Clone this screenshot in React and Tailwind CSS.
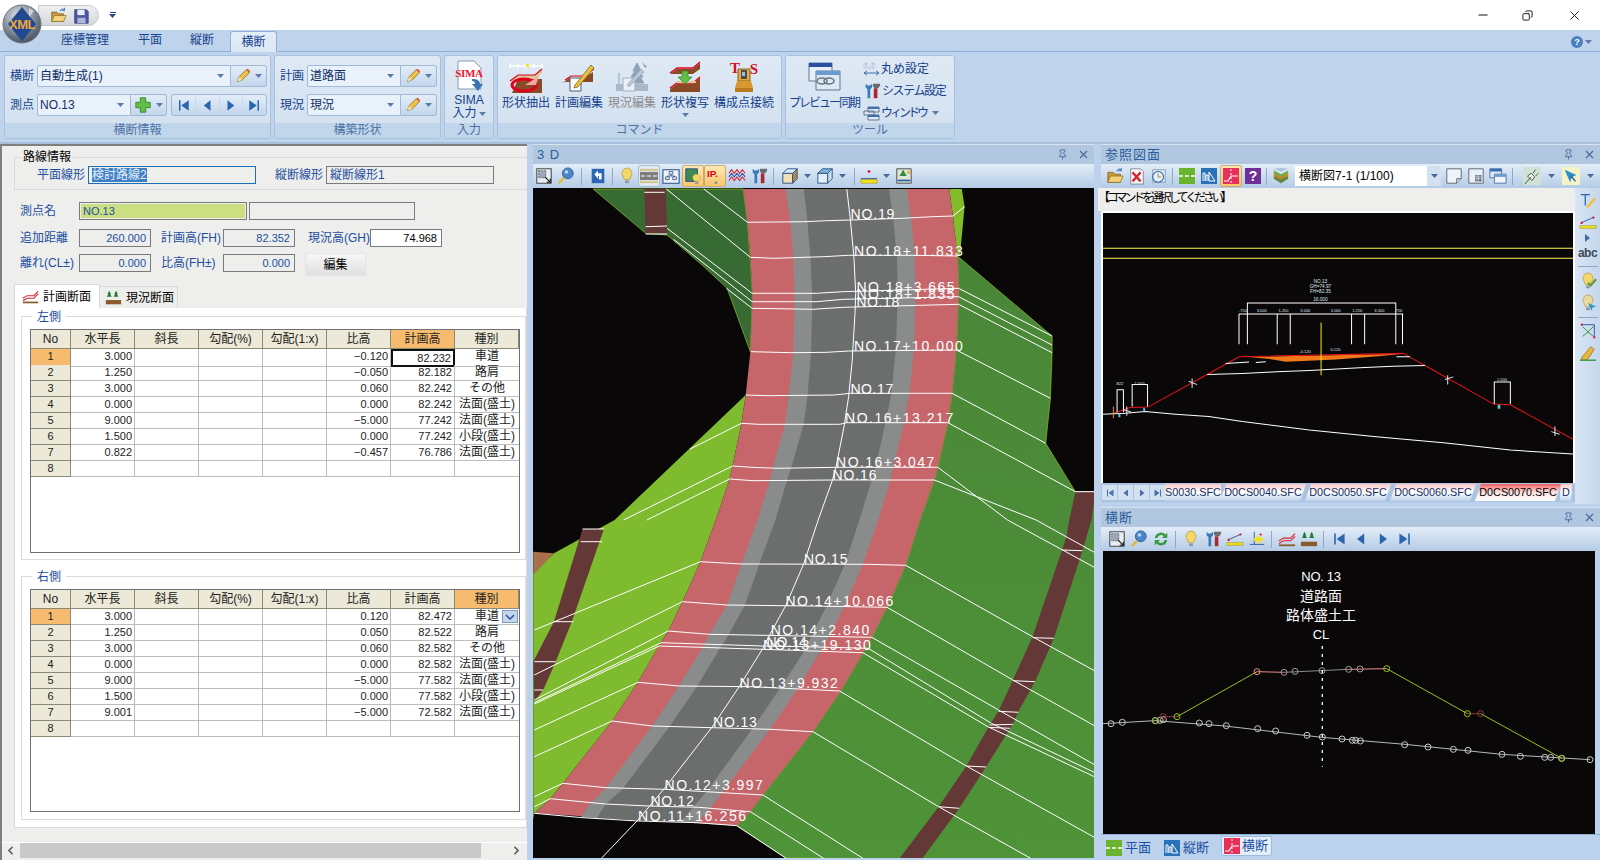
import React from 'react';
import { Minus, X, Copy, ChevronLeft, ChevronRight, Pin } from 'lucide-react';

const Caret = ({ c = '#5b7ca8' }) => (
  <svg width="7" height="4" className="shrink-0"><path d="M0 0h7L3.5 4z" fill={c} /></svg>
);

// ---- small toolbar icons ----
const S = ({ s = 18, children }) => <svg width={s} height={s} viewBox="0 0 20 20" className="shrink-0">{children}</svg>;

const Pencil = ({ s = 16 }) => (
  <S s={s}>
    <path d="M3 17l2-6 9-9 4 4-9 9z" fill="#f0c040" stroke="#6b5a20" strokeWidth=".8" />
    <path d="M14 2l4 4 1-2-3-3z" fill="#d65a4a" />
    <path d="M3 17l2-6 4 4z" fill="#f3dcb0" />
  </S>
);
const Plus = () => (
  <S s={18}><path d="M7 2h6v5h5v6h-5v5H7v-5H2V7h5z" fill="#63bd46" stroke="#2f8a2a" strokeWidth="1" /></S>
);
const Nav = ({ d, s = 16, c = '#2a66ad' }) => {
  const p = { first: 'M4 3h2v14H4zM17 3v14L7 10z', prev: 'M14 3v14L5 10z', next: 'M6 3v14l9-7z', last: 'M14 3h2v14h-2zM3 3v14l10-7z' };
  return <S s={s}><path d={p[d]} fill={c} /></S>;
};
const Folder = ({ s = 18 }) => (
  <S s={s}>
    <path d="M2 6h6l2 2h6v9H2z" fill="#c99a3a" stroke="#7b5a1c" strokeWidth=".8" />
    <path d="M2 17l3-7h14l-3 7z" fill="#f2d37a" stroke="#8b6a22" strokeWidth=".8" />
    <path d="M12 5c1-3 3-3 5-2M17 1v3h-3" stroke="#4a7fc0" fill="none" strokeWidth="1.2" />
  </S>
);
const Floppy = () => (
  <S s={18}>
    <path d="M3 3h13l2 2v13H3z" fill="#5059a8" stroke="#2d3470" strokeWidth=".8" />
    <path d="M6 3h8v6H6z" fill="#e9edf5" />
    <path d="M6 12h9v6H6z" fill="#aeb6d8" />
  </S>
);
const ZoomBox = () => (
  <S>
    <path d="M2 2h16v16H2z" fill="#e8eef5" stroke="#4a4a4a" strokeWidth="1.2" />
    <path d="M4 4h8v8H4z" fill="#9aa9bb" strokeDasharray="2 1" stroke="#333" strokeWidth=".6" />
    <path d="M11 11l6 6M17 13v4h-4" stroke="#111" strokeWidth="1.2" fill="none" />
  </S>
);
const Magnifier = () => (
  <S>
    <path d="M8 12l-6 6" stroke="#e0b83a" strokeWidth="2.6" />
    <circle cx="12" cy="7" r="6" fill="#4a86c8" stroke="#2c5c96" />
    <circle cx="10.5" cy="5.5" r="2" fill="#bcd8f2" />
  </S>
);
const Back = () => (
  <S>
    <path d="M3 2h14v16H3z" fill="#2a66b5" />
    <path d="M6 8l4-4v3h4v7h-3v-4h-1v3z" fill="#fff" />
  </S>
);
const Bulb = ({ c = '#f3d76a', badge }) => (
  <S>
    <path d="M10 1a6 6 0 0 1 4 10l-1 3H7l-1-3a6 6 0 0 1 4-10z" fill={c} stroke="#b89a3a" strokeWidth=".8" />
    <path d="M8 15h4v3H8z" fill="#8b97a5" />
    {badge === 'check' && <path d="M10 12l3 3 6-7" stroke="#5f9a3a" strokeWidth="2.4" fill="none" />}
    {badge === 'arrow' && <path d="M10 10l9 4-4 1-1 4z" fill="#2a9ac8" />}
  </S>
);
const Road = () => (
  <S s={20}>
    <path d="M1 2h18v16H1z" fill="#dfe3e6" />
    <path d="M1 6h18v8H1z" fill="#7d7d7d" />
    <path d="M2 10h4M8 10h4M14 10h4" stroke="#fff" strokeWidth="1.2" />
    <path d="M1 4h18M1 16h18" stroke="#c8a84a" strokeWidth="1" />
  </S>
);
const Tree = () => (
  <S>
    <path d="M1 3h18v15H1z" fill="#eef3f9" stroke="#28507f" strokeWidth="1.2" />
    <path d="M8 5h4v3H8zM4 11h4v3H4zM12 11h4v3h-4zM10 8v2M6 10h8M6 10v1M14 10v1" fill="none" stroke="#28507f" strokeWidth=".9" />
  </S>
);
const BulbMap = () => (
  <S>
    <path d="M2 2h13v14H2z" fill="#3f8a52" stroke="#26507f" />
    <path d="M14 8a4 4 0 0 1 3 7l-1 1h-4l-1-1a4 4 0 0 1 3-7z" fill="#f3d76a" stroke="#b89a3a" strokeWidth=".6" />
    <path d="M12 17h4v2h-4z" fill="#8b97a5" />
  </S>
);
const IpBulb = () => (
  <S>
    <text x="1" y="11" fontFamily="Liberation Sans" fontWeight="700" fontSize="11" fill="#e2001a">IP.</text>
    <path d="M9 11h4l-1 5h-2z" fill="#f3d76a" />
    <path d="M9.5 16h3v3h-3z" fill="#8b97a5" />
  </S>
);
const Wave = () => (
  <S>
    <path d="M1 7l3-4 3 4 3-4 3 4 3-4 3 4" stroke="#d9272e" fill="none" strokeWidth="1.2" />
    <path d="M1 11l3-4 3 4 3-4 3 4 3-4 3 4" stroke="#2a4fa8" fill="none" strokeWidth="1.2" />
    <path d="M1 15l3-4 3 4 3-4 3 4 3-4 3 4" stroke="#d9272e" fill="none" strokeWidth="1.2" />
  </S>
);
const Tools = () => (
  <S>
    <path d="M3 2v4l2 2v10h3V8l2-2V2L8 4H5z" fill="#3d78b8" />
    <path d="M12 7h4v11h-4z" fill="#a82a30" />
    <path d="M11 2h8v2l-2 3h-4l-2-2z" fill="#6c6c6c" />
  </S>
);
const Cube = ({ glass }) => (
  <S>
    <path d="M2 7h11v11H2z" fill={glass ? '#e4eef8' : '#f1dfb8'} stroke="#26507f" />
    <path d="M2 7l5-5h11l-5 5z" fill={glass ? '#7fb2de' : '#d9ecfa'} stroke="#26507f" />
    <path d="M13 7l5-5v11l-5 5z" fill={glass ? '#c6dcf0' : '#b08a4a'} stroke="#26507f" />
  </S>
);
const RulerDot = () => (
  <S>
    <circle cx="10" cy="5" r="1.5" fill="#e0001b" />
    <path d="M1 13h18" stroke="#24406e" strokeWidth="1" />
    <path d="M1 14h18v4H1z" fill="#f2e21c" stroke="#8a7d10" strokeWidth=".5" />
  </S>
);
const LandImg = () => (
  <S>
    <path d="M2 2h16v16H2z" fill="#dfe6d8" stroke="#444" />
    <path d="M9 3l4 7H5z" fill="#2f8a3a" />
    <path d="M3 15h14" stroke="#2a66ad" strokeWidth="2" />
    <circle cx="15" cy="6" r="1.8" fill="#e3b93a" />
  </S>
);
const XDoc = () => (
  <S>
    <path d="M3 2h11l3 3v14H3z" fill="#f5f7fa" stroke="#7a8698" />
    <path d="M5 6l9 10M14 6L5 16" stroke="#d9272e" strokeWidth="2.6" />
  </S>
);
const Clock = () => (
  <S>
    <path d="M3 3h14v14H3z" fill="#dbe7f5" stroke="#7a8ea8" strokeWidth=".8" />
    <circle cx="9" cy="11" r="6" fill="#e8f1fa" stroke="#2a66ad" strokeWidth="1.2" />
    <path d="M9 7v4h3" stroke="#b89a3a" strokeWidth="1.2" fill="none" />
  </S>
);
const GreenMode = ({ s = 16 }) => (
  <svg width={s} height={s} viewBox="0 0 16 16" className="shrink-0">
    <path d="M0 0h16v16H0z" fill="#6ab42d" />
    <path d="M0 8h4M6 8h4M12 8h4" stroke="#fff" strokeWidth="1.6" />
  </svg>
);
const BlueMode = ({ s = 16 }) => (
  <svg width={s} height={s} viewBox="0 0 16 16" className="shrink-0">
    <path d="M0 0h16v16H0z" fill="#2a72b8" />
    <path d="M2 13V5h2v8M5 13V7h2v6M8 13V4l6 9z" stroke="#fff" strokeWidth="1" fill="none" />
  </svg>
);
const RedMode = ({ s = 16 }) => (
  <svg width={s} height={s} viewBox="0 0 16 16" className="shrink-0">
    <path d="M0 0h16v16H0z" fill="#e6305a" />
    <path d="M1 13h4l3-5h7" stroke="#fff" strokeWidth="1.2" fill="none" />
    <path d="M8 1v2M8 5v2M8 9v2M8 13v2" stroke="#fff" strokeWidth="1" />
  </svg>
);
const Help = () => (
  <svg width="16" height="16" viewBox="0 0 16 16" className="shrink-0">
    <path d="M0 0h16v16H0z" fill="#6f2f96" />
    <text x="8" y="13" textAnchor="middle" fontFamily="Liberation Sans" fontWeight="700" fontSize="14" fill="#fff">?</text>
  </svg>
);
const Layers = () => (
  <S>
    <path d="M10 11l8-4v3l-8 5-8-5V7z" fill="#d97a2b" />
    <path d="M10 8l8-4v3l-8 5-8-5V4z" fill="#6fae3d" />
    <path d="M10 5l8-3-8-1-8 1z" fill="#a6c4e0" />
    <path d="M10 14l8-4v3l-8 5-8-5v-3z" fill="#5a8a3a" />
  </S>
);
const Note = () => (
  <S>
    <path d="M2 2h16v11l-5 5H2z" fill="#eef4fa" stroke="#56606e" />
    <path d="M13 18v-5h5" fill="#cfdbe8" stroke="#56606e" />
  </S>
);
const Calc = () => (
  <S>
    <path d="M2 2h16v16H2z" fill="#e8f0f8" stroke="#56606e" />
    <path d="M9 9h7v7H9z" fill="#56606e" />
    <path d="M11 9v7M13 9v7M9 11h7M9 13h7" stroke="#e8f0f8" strokeWidth=".7" />
  </S>
);
const Windows = () => (
  <S s={18}>
    <path d="M1 2h13v10H1z" fill="#dbe8f5" stroke="#4a72a8" />
    <path d="M1 2h13v3H1z" fill="#3d6cb0" />
    <path d="M6 8h13v10H6z" fill="#eef4fa" stroke="#4a72a8" />
    <path d="M6 8h13v3H6z" fill="#6a9ad0" />
  </S>
);
const Plug = () => (
  <S>
    <path d="M0 0h20v20H0z" fill="#cfe2d4" />
    <path d="M2 19l7-8M9 7l4 4-3 4-5-5zM11 7l3-4M14 10l3-3" stroke="#444" fill="#f4f4f4" strokeWidth="1" />
  </S>
);
const Arrow = () => (
  <S>
    <path d="M0 0h20v20H0z" fill="#f4f3c8" />
    <path d="M3 3l13 6-5 2-2 6z" fill="#2a8fc8" />
    <path d="M10 10l5 6" stroke="#2a5f9a" strokeWidth="1.6" />
  </S>
);
const Sep = () => <div className="w-px h-[17px] bg-[#8fa9c8] shrink-0" />;
const Slope = ({ s = 18, tree }) => (
  <S s={s}>
    {tree ? (
      <path d="M5 2l2 4h-1l2 3H2l2-3H3zM13 2l2 4h-1l2 3h-6l2-3h-1z" fill="#1e7a2e" />
    ) : (
      <path d="M1 12l5-3h8l5-5M1 15l5-3h8l5-5" stroke="#d9272e" fill="none" strokeWidth="1.2" />
    )}
    <path d="M1 13h18v5H1z" fill={tree ? '#8a5a2c' : 'none'} />
    {!tree && <path d="M1 16h18v2H1z" fill="#8a5a2c" />}
  </S>
);
const SlopeRuler = () => (
  <S>
    <path d="M2 11l14-6" stroke="#2a4fa8" strokeWidth="1" />
    <circle cx="3" cy="11" r="1.2" fill="#e0001b" />
    <circle cx="16" cy="5" r="1.2" fill="#e0001b" />
    <path d="M1 14h18v3H1z" fill="#f2e21c" stroke="#8a7d10" strokeWidth=".5" />
  </S>
);
const Offset = () => (
  <S>
    <path d="M7 2v14M2 16h16" stroke="#2a4fa8" strokeWidth="1" />
    <path d="M6 9h4V6h3v3h4v3h-4v3h-3v-3H6z" fill="#f2e21c" />
    <circle cx="14" cy="5" r="1.2" fill="#e0001b" />
  </S>
);
const Refresh = () => (
  <S>
    <path d="M3 9a7 7 0 0 1 12-4l2-2v6h-6l2-2a4 4 0 0 0-7 2zM17 11a7 7 0 0 1-12 4l-2 2v-6h6l-2 2a4 4 0 0 0 7-2z" fill="#3a9a42" />
  </S>
);

// ---- large ribbon icons ----
const Big = ({ children }) => <svg width="34" height="32" viewBox="0 0 34 32">{children}</svg>;
const SimaIcon = () => (
  <Big>
    <path d="M6 1h16l7 7v21H6z" fill="#fff" stroke="#8b9bb0" />
    <text x="17" y="17" textAnchor="middle" fontFamily="Liberation Serif" fontSize="11" fontWeight="700" fill="#f0142d" letterSpacing="-.3">SIMA</text>
    <path d="M20 19c6 0 8 2 8 5h3l-5 7-6-7h3c0-2-1-3-3-3z" fill="#3c74b8" />
  </Big>
);
const ShapeExtract = () => (
  <Big>
    <path d="M1 2v5M9 2v5M17 2v5M25 2v5M33 2v5M1 5h32" stroke="#fff" strokeWidth="1.5" />
    <path d="M17 3h3v3h-3z" fill="#f2e21c" />
    <path d="M1 20l8-6h17l7-6v4l-7 6H9z" fill="#d9c79a" />
    <path d="M1 20l8-6h17l7-6" stroke="#e0001b" fill="none" strokeWidth="1.2" />
    <path d="M9 18h24v14H3z" fill="#8a4a26" />
    <ellipse cx="15" cy="24" rx="12" ry="6" fill="none" stroke="#e0001b" strokeWidth="3" />
    <path d="M16 24l14-9-3 9z" fill="#f3a7a0" />
  </Big>
);
const PlanEdit = () => (
  <Big>
    <path d="M1 22l6-5h14l10-6v10H1z" fill="#8a4a26" />
    <path d="M3 19l6-4h12l11-7" stroke="#e0001b" fill="none" strokeWidth="1.2" />
    <path d="M8 17h11v13H8z" fill="#fff" stroke="#4c5a6c" />
    <path d="M13 24L29 4l3 3-16 19-4 1z" fill="#eebf3c" stroke="#6b5a20" strokeWidth=".7" />
  </Big>
);
const GhostEdit = () => (
  <Big>
    <path d="M4 24V12M22 2l4 8h-2l4 6h-3l4 6H15l4-6h-3l4-6h-2z" fill="#8ea3b8" stroke="#8ea3b8" />
    <path d="M27 1l3 3 2 1-2 2z" fill="#8ea3b8" />
    <path d="M1 23h32v7H1z" fill="#a9b7c6" />
    <path d="M8 17h12v13H8z" fill="#e8eff6" stroke="#9fb0c0" />
    <path d="M12 24L26 8l3 3-15 15z" fill="#b9c8d6" stroke="#8c9cae" strokeWidth=".6" />
  </Big>
);
const ShapeCopy = () => (
  <Big>
    <path d="M2 13l7-5h16l7-6v6l-7 5H2z" fill="#8a4a26" />
    <path d="M2 12l7-5h16l7-6" stroke="#e0001b" fill="none" strokeWidth="1.4" />
    <path d="M2 28l7-5h16l7-6v14H2z" fill="#8a4a26" />
    <path d="M2 27l7-5h16l7-6" stroke="#e0001b" fill="none" strokeWidth="1.4" />
    <path d="M6 22l4-2h18v2z" fill="#d9c79a" />
    <path d="M14 10h6v6h4l-7 7-7-7h4z" fill="#63bd46" stroke="#2f8a2a" strokeWidth=".7" />
  </Big>
);
const TsIcon = () => (
  <Big>
    <path d="M11 8h12v12H11z" fill="#e8a93c" stroke="#8a6418" />
    <path d="M14 9h6v9h-6z" fill="#4c4c55" />
    <path d="M15 11h3v4h-3z" fill="#8fc0e8" />
    <path d="M10 20h14l2 7H8z" fill="#d79a30" />
    <path d="M8 27h18v4H8z" fill="#b97a20" />
    <text x="8" y="12" textAnchor="middle" fontFamily="Liberation Serif" fontSize="15" fontWeight="700" fill="#d3101e">T</text>
    <text x="27" y="13" textAnchor="middle" fontFamily="Liberation Serif" fontSize="15" fontWeight="700" fill="#d3101e">S</text>
  </Big>
);
const PreviewSync = () => (
  <Big>
    <path d="M2 2h23v18H2z" fill="#e8f0f8" stroke="#5f7892" />
    <path d="M2 2h23v4H2z" fill="#2a4fa0" />
    <path d="M9 10h24v19H9z" fill="#dce8f4" stroke="#5f7892" />
    <path d="M9 10h24v4H9z" fill="#6a9ad0" />
    <ellipse cx="15" cy="20" rx="5" ry="3" fill="none" stroke="#6a7683" strokeWidth="1.6" />
    <ellipse cx="22" cy="20" rx="5" ry="3" fill="none" stroke="#6a7683" strokeWidth="1.6" />
  </Big>
);
const RoundIcon = () => (
  <svg width="17" height="16" viewBox="0 0 17 16" className="shrink-0">
    <text x="0" y="8" fontFamily="Liberation Sans" fontSize="9" fontWeight="700" fill="#fff" stroke="#6b8ab0" strokeWidth=".3">0.0</text>
    <path d="M1 12h15M1 12l3-2M1 12l3 2M16 12l-3-2M16 12l-3 2" stroke="#3f6fa8" fill="none" />
  </svg>
);
const WindowIcon = () => (
  <svg width="17" height="15" viewBox="0 0 17 15" className="shrink-0">
    <path d="M5 1h11v5H5zM1 5h10v4H1zM5 9h11v5H5z" fill="#dfe9f4" stroke="#5f7892" />
    <path d="M5 1h11v2H5zM5 9h11v2H5z" fill="#3f6fa8" />
  </svg>
);
const Logo = () => (
  <svg width="40" height="40" viewBox="0 0 40 40">
    <defs>
      <radialGradient id="orb" cx=".4" cy=".3" r=".8">
        <stop offset="0" stopColor="#dfe6ee" />
        <stop offset=".7" stopColor="#66717f" />
        <stop offset="1" stopColor="#3d434d" />
      </radialGradient>
    </defs>
    <circle cx="20" cy="20" r="19" fill="url(#orb)" stroke="#6f7882" />
    <path d="M20 3l14 17-14 17L6 20z" fill="#22498f" />
    <path d="M27 4l5 3-5 6z" fill="#e9edf3" opacity=".7" />
    <text x="20" y="25" textAnchor="middle" fontFamily="Liberation Sans" fontSize="13" fontWeight="700" fill="#f0a63c" letterSpacing="-.5">XML</text>
  </svg>
);

// ---- ribbon ----
const Combo = ({ w, text }) => (
  <div className={`${w} h-[22px] bg-[#e9f1fb] border border-[#a1b9d6] flex items-center pl-[2px] pr-[6px] justify-between rounded-l-[2px]`}>
    <span className="text-[12px] text-[#102f63] whitespace-nowrap">{text}</span>
    <Caret />
  </div>
);
const EditBtn = ({ children }) => (
  <div className="w-[36px] h-[22px] border border-l-0 border-[#a1b9d6] rounded-r-[3px] bg-gradient-to-b from-[#e3edf8] to-[#c3d6ec] flex items-center justify-center gap-[4px]">
    {children || <Pencil />}
    <Caret />
  </div>
);
const RibbonLabel = ({ children }) => <span className="text-[12px] text-[#15428b] whitespace-nowrap">{children}</span>;

const Group = ({ w, title, children }) => (
  <div className={`${w} h-[84px] rounded-[3px] border border-[#a8c2de] bg-gradient-to-b from-[#dfe9f5] to-[#d1e0ef] flex flex-col overflow-hidden shrink-0`}>
    <div className="flex-1 min-h-0">{children}</div>
    <div className="h-[15px] bg-[#c1d5eb] text-[12px] leading-[15px] text-[#4d72a3] text-center">{title}</div>
  </div>
);

const BigBtn = ({ w, icon, label, caret, gray, tight }) => (
  <div className={`${w} flex flex-col items-center shrink-0`}>
    <div className="h-[33px] flex items-center justify-center">{icon}</div>
    <div className={`text-[12px] leading-[14px] mt-[3px] whitespace-nowrap ${tight ? 'tracking-[-2px]' : ''} ${gray ? 'text-[#8c8c8c]' : 'text-[#15428b]'}`}>{label}</div>
    {caret && <div className="mt-[3px]"><Caret /></div>}
  </div>
);

const SmallTool = ({ icon, label, caret, tracking = '' }) => (
  <div className="h-[22px] flex items-center gap-[1px] whitespace-nowrap">
    {icon}
    <span className={`text-[12px] text-[#15428b] ${tracking}`}>{label}</span>
    {caret && <span className="ml-[5px]"><Caret /></span>}
  </div>
);

const Ribbon = () => (
  <div className="h-[92px] shrink-0 bg-[#bfd3ed] flex gap-[3px] pl-[4px] pt-[3px] border-b-[2px] border-[#a7c1dd]">
    <Group w="w-[267px]" title="横断情報">
      <div className="flex flex-col gap-[7px] pt-[9px] pl-[5px]">
        <div className="flex items-center gap-[3px]">
          <RibbonLabel>横断</RibbonLabel>
          <div className="flex"><Combo w="w-[194px]" text="自動生成(1)" /><EditBtn /></div>
        </div>
        <div className="flex items-center gap-[3px]">
          <RibbonLabel>測点</RibbonLabel>
          <div className="flex"><Combo w="w-[94px]" text="NO.13" /><EditBtn><Plus /></EditBtn></div>
          <div className="ml-[1px] flex h-[22px] w-[96px] border border-[#a1b9d6] rounded-[3px] bg-gradient-to-b from-[#e3edf8] to-[#c3d6ec]">
            {['first', 'prev', 'next', 'last'].map((d, i) => (
              <div key={d} className={`flex-1 flex items-center justify-center ${i ? 'border-l border-[#c9d9ea]' : ''}`}><Nav d={d} s={15} /></div>
            ))}
          </div>
        </div>
      </div>
    </Group>
    <Group w="w-[167px]" title="構築形状">
      <div className="flex flex-col gap-[7px] pt-[9px] pl-[5px]">
        <div className="flex items-center gap-[3px]">
          <RibbonLabel>計画</RibbonLabel>
          <div className="flex"><Combo w="w-[94px]" text="道路面" /><EditBtn /></div>
        </div>
        <div className="flex items-center gap-[3px]">
          <RibbonLabel>現況</RibbonLabel>
          <div className="flex"><Combo w="w-[94px]" text="現況" /><EditBtn /></div>
        </div>
      </div>
    </Group>
    <Group w="w-[50px]" title="入力">
      <div className="flex flex-col items-center pt-[4px]">
        <div className="h-[32px]"><SimaIcon /></div>
        <div className="text-[12px] leading-[13px] text-[#15428b] mt-[2px]">SIMA</div>
        <div className="text-[12px] leading-[13px] text-[#15428b] flex items-center gap-[2px]">入力<Caret /></div>
      </div>
    </Group>
    <Group w="w-[285px]" title="コマンド">
      <div className="flex pt-[4px] pl-[4px] gap-[5px]">
        <BigBtn w="w-[48px]" icon={<ShapeExtract />} label="形状抽出" />
        <BigBtn w="w-[48px]" icon={<PlanEdit />} label="計画編集" />
        <BigBtn w="w-[48px]" icon={<GhostEdit />} label="現況編集" gray />
        <BigBtn w="w-[48px]" icon={<ShapeCopy />} label="形状複写" caret />
        <BigBtn w="w-[60px]" icon={<TsIcon />} label="構成点接続" />
      </div>
    </Group>
    <Group w="w-[170px]" title="ツール">
      <div className="flex pt-[4px] pl-[4px]">
        <BigBtn w="w-[68px]" icon={<PreviewSync />} label="プレビュー同期" tight />
        <div className="flex flex-col ml-[5px] -mt-[2px]">
          <SmallTool icon={<RoundIcon />} label="丸め設定" />
          <SmallTool icon={<Tools />} label="システム設定" tracking="tracking-[-1.4px]" />
          <SmallTool icon={<WindowIcon />} label="ウィンドウ" tracking="tracking-[-3px]" caret />
        </div>
      </div>
    </Group>
  </div>
);

// ---- left panel ----
const LabelB = ({ w, className = '', children }) => (
  <span className={`${w} shrink-0 text-[12px] leading-[18px] text-[#1d4ea0] whitespace-nowrap ${className}`}>{children}</span>
);
const Val = ({ children, white, w = 'w-[72px]' }) => (
  <div className={`${w} h-[18px] shrink-0 border border-[#7a7a7a] px-[4px] text-right text-[11px] leading-[16px] ${white ? 'bg-white text-black' : 'text-[#1d4ea0]'}`}>{children}</div>
);

const cols = 'grid grid-cols-[40px_64px_64px_64px_64px_64px_64px_1fr]';
const heads = ['No', '水平長', '斜長', '勾配(%)', '勾配(1:x)', '比高', '計画高', '種別'];

const GridTable = ({ rows, activeHead, selectCell, dropdownFirst, h = 'h-[224px]' }) => (
  <div className={`${h} border border-[#6f6f6f] bg-white overflow-hidden`}>
    <div className={`${cols} h-[19px]`}>
      {heads.map((t, i) => (
        <div key={t} className={`border-r border-b border-[#8b8a78] text-center text-[12px] leading-[18px] text-[#222] ${i === activeHead ? 'bg-[#f6bb6e]' : 'bg-[#ece9d8]'}`}>{t}</div>
      ))}
    </div>
    {rows.map((r, idx) => (
      <div key={idx} className={`${cols} h-[16px]`}>
        <div className={`border-r border-b border-[#8b8a78] text-center text-[11px] leading-[15px] text-[#222] ${idx === 0 ? 'bg-[#f6bb6e]' : 'bg-[#ece9d8]'}`}>{idx + 1}</div>
        <div className="border-r border-b border-[#bdbdbd] text-right pr-[2px] text-[11px] leading-[15px] text-[#222]">{r[0]}</div>
        <div className="border-r border-b border-[#bdbdbd]" />
        <div className="border-r border-b border-[#bdbdbd]" />
        <div className="border-r border-b border-[#bdbdbd]" />
        <div className="border-r border-b border-[#bdbdbd] text-right pr-[2px] text-[11px] leading-[15px] text-[#222]">{r[1]}</div>
        <div className={`text-right pr-[2px] text-[11px] leading-[14px] text-[#222] ${selectCell && idx === 0 ? 'border-2 border-[#111]' : 'border-r border-b border-[#bdbdbd] leading-[15px]'}`}>{r[2]}</div>
        <div className="border-b border-[#bdbdbd] text-center text-[12px] leading-[15px] text-[#222] whitespace-nowrap overflow-hidden relative">
          {r[3]}
          {dropdownFirst && idx === 0 && (
            <span className="absolute right-[1px] top-[1px] h-[13px] w-[16px] bg-[#c3d6ec] border border-[#7f9db9] flex items-center justify-center">
              <svg width="10" height="6" viewBox="0 0 10 6"><path d="M1 1l4 4 4-4" stroke="#2a4fa0" strokeWidth="1.5" fill="none" /></svg>
            </span>
          )}
        </div>
      </div>
    ))}
  </div>
);

const rowsL = [
  ['3.000', '−0.120', '82.232', '車道'],
  ['1.250', '−0.050', '82.182', '路肩'],
  ['3.000', '0.060', '82.242', 'その他'],
  ['0.000', '0.000', '82.242', '法面(盛土)'],
  ['9.000', '−5.000', '77.242', '法面(盛土)'],
  ['1.500', '0.000', '77.242', '小段(盛土)'],
  ['0.822', '−0.457', '76.786', '法面(盛土)'],
  ['', '', '', ''],
];
const rowsR = [
  ['3.000', '0.120', '82.472', '車道'],
  ['1.250', '0.050', '82.522', '路肩'],
  ['3.000', '0.060', '82.582', 'その他'],
  ['0.000', '0.000', '82.582', '法面(盛土)'],
  ['9.000', '−5.000', '77.582', '法面(盛土)'],
  ['1.500', '0.000', '77.582', '小段(盛土)'],
  ['9.001', '−5.000', '72.582', '法面(盛土)'],
  ['', '', '', ''],
];

const SideGroup = ({ title, className = '', children }) => (
  <div className={`relative h-[244px] border border-[#dcdcdc] pl-[8px] pr-[5px] pt-[12px] ${className}`}>
    <span className="absolute left-[10px] -top-[8px] bg-white px-[5px] text-[12px] leading-[16px] text-[#1d4ea0]">{title}</span>
    {children}
  </div>
);

const LeftPanel = () => (
  <div className="w-[527px] shrink-0 h-full bg-[#eeeeec] border-l-2 border-t-2 border-[#7f7f7f] flex flex-col overflow-hidden">
    <div className="relative ml-[12px] mt-[11px] h-[33px] border border-r-0 border-[#dadada] flex items-center shrink-0">
      <span className="absolute left-[6px] -top-[9px] bg-[#eeeeec] px-[2px] text-[12px] leading-[16px] text-black">路線情報</span>
      <LabelB w="w-[51px]" className="ml-[22px] mt-[2px]">平面線形</LabelB>
      <div className="w-[168px] h-[18px] mt-[2px] border border-[#1a6fb5] px-[3px] text-[12px] leading-[16px] text-[#e8f0fa]">
        <span className="bg-[#3f7fc6]">検討路線2</span>
      </div>
      <LabelB w="w-[51px]" className="ml-[19px] mt-[2px]">縦断線形</LabelB>
      <div className="w-[168px] h-[18px] mt-[2px] border border-[#7a7a7a] px-[3px] text-[12px] leading-[16px] text-[#1d4ea0]">縦断線形1</div>
    </div>

    <div className="flex mt-[12px] pl-[18px] shrink-0">
      <LabelB w="w-[59px]">測点名</LabelB>
      <div className="w-[168px] h-[18px] border border-[#7a7a7a] p-px"><div className="h-full bg-[#cbdf82] px-[2px] text-[11px] leading-[14px] text-[#1d4ea0]">NO.13</div></div>
      <div className="w-[166px] h-[18px] ml-[2px] border border-[#7a7a7a]" />
    </div>

    <div className="flex mt-[9px] pl-[18px] shrink-0">
      <LabelB w="w-[59px]">追加距離</LabelB>
      <Val>260.000</Val>
      <LabelB w="w-[72px]" className="pl-[10px]">計画高(FH)</LabelB>
      <Val>82.352</Val>
      <LabelB w="w-[75px]" className="pl-[13px]">現況高(GH)</LabelB>
      <Val white>74.968</Val>
    </div>

    <div className="flex mt-[7px] pl-[18px] shrink-0 h-[23px]">
      <LabelB w="w-[59px]">離れ(CL±)</LabelB>
      <Val>0.000</Val>
      <LabelB w="w-[72px]" className="pl-[10px]">比高(FH±)</LabelB>
      <Val>0.000</Val>
      <div className="ml-[10px] -mt-px w-[61px] h-[23px] bg-gradient-to-b from-[#f6f6f6] to-[#e0e0e0] text-center text-[12px] leading-[23px] text-black border border-[#e4e4e4]">編集</div>
    </div>

    <div className="flex items-end ml-[12px] mt-[7px] h-[24px] shrink-0">
      <div className="h-[24px] w-[86px] bg-white border border-b-0 border-[#d8d8d8] flex items-center gap-[4px] pl-[7px] text-[12px] text-black">
        <Slope s={17} />計画断面
      </div>
      <div className="h-[22px] w-[78px] border border-l-0 border-b-0 border-[#d8d8d8] flex items-center gap-[4px] pl-[5px] text-[12px] text-black">
        <Slope s={17} tree />現況断面
      </div>
    </div>

    <div className="ml-[12px] h-[520px] shrink-0 bg-white border border-t-0 border-[#dadada] pl-[6px] pt-[8px] flex flex-col">
      <SideGroup title="左側">
        <GridTable rows={rowsL} activeHead={6} selectCell />
      </SideGroup>
      <SideGroup title="右側" className="mt-[16px]">
        <GridTable rows={rowsR} activeHead={7} dropdownFirst h="h-[223px]" />
      </SideGroup>
    </div>

    <div className="mt-[14px] h-[15px] bg-[#eeeeec] flex items-center shrink-0 border-t border-white">
      <ChevronLeft size={13} strokeWidth={3} className="text-[#555] mx-[2px] shrink-0" />
      <div className="w-[461px] h-[15px] bg-[#c8c9c8] ml-[1px]" />
      <div className="flex-1" />
      <ChevronRight size={13} strokeWidth={3} className="text-[#555] mr-[4px] shrink-0" />
    </div>
  </div>
);

// ---- 3D view ----
const px = (x) => (x / 2.8 - 13).toFixed(1);
const py = (y) => (y / 3 - 8).toFixed(1);
const P = (a) => a.map(([x, y]) => `${px(x)},${py(y)}`).join(' ');
const low = (a) => a.map(([x, y]) => [x, y + 1020]);

const pinkL = [[625, 27], [637, 127], [645, 232], [651, 340], [650, 385], [645, 516], [632, 645], [620, 730], [595, 858], [587, 897], ...low([[548, 0], [505, 125], [455, 245], [415, 333], [390, 375], [330, 487], [258, 603], [120, 790], [85, 836], [40, 880]])];
const pinkR = [[1202, 27], [1212, 108], [1225, 228], [1228, 325], [1227, 375], [1222, 500], [1210, 640], [1198, 728], [1170, 860], [1160, 900], ...low([[1120, 0], [1080, 135], [1028, 262], [985, 352], [960, 400], [897, 515], [820, 635], [680, 825], [645, 875], [607, 917]])];
const grayL = [[743, 27], [757, 127], [765, 235], [768, 340], [768, 385], [765, 520], [752, 648], [742, 733], [708, 862], [700, 900], ...low([[665, 0], [620, 132], [580, 255], [530, 343], [510, 385], [445, 498], [370, 618], [240, 805], [195, 852], [170, 892]])];
const grayR = [[1083, 27], [1095, 115], [1105, 228], [1108, 330], [1107, 375], [1103, 510], [1090, 640], [1075, 730], [1045, 862], [1037, 900], ...low([[1003, 0], [960, 133], [908, 260], [865, 350], [840, 395], [775, 510], [700, 628], [565, 820], [530, 868], [497, 908]])];
const darkL = [[795, 27], [805, 125], [813, 233], [818, 340], [818, 385], [815, 515], [805, 648], [795, 730], [760, 862], [748, 900], ...low([[715, 0], [670, 132], [630, 255], [585, 343], [560, 385], [495, 500], [420, 618], [285, 810], [240, 852], [215, 895]])];
const darkR = [[1033, 27], [1045, 115], [1055, 228], [1058, 330], [1057, 375], [1052, 510], [1040, 640], [1023, 730], [995, 862], [985, 900], ...low([[950, 0], [910, 133], [857, 260], [815, 350], [795, 395], [725, 510], [650, 628], [520, 818], [480, 868], [450, 905]])];
const band = (l, r) => P([...l, ...[...r].reverse()]);

const stripR = [[1555, 935], [1538, 1020], ...low([[1530, 50], [1518, 90], [1435, 350], [1380, 480], [1340, 573], [1315, 615], [1250, 738], [1172, 860], [1063, 1015], [1127, 1015], [1230, 865], [1305, 740], [1380, 612], [1395, 575], [1442, 485], [1495, 355], [1575, 92], [1600, 0]]), [1612, 935]];

const lines = [
  [[515, 27], [637, 127], [795, 125], [860, 122], [925, 120], [1070, 115], [1155, 110], [1212, 108], [1245, 80]],
  [[410, 27], [645, 232], [712, 235], [850, 230], [920, 226], [1100, 226], [1225, 228]],
  [[412, 145], [650, 340], [830, 340], [905, 335], [1228, 325], [1490, 468]],
  [[430, 178], [650, 365], [830, 365], [905, 358], [1228, 350], [1490, 495]],
  [[578, 325], [650, 385], [820, 388], [905, 382], [1228, 373], [1490, 518]],
  [[647, 515], [760, 518], [860, 517], [920, 513], [1222, 510], [1485, 655]],
  [[632, 645], [695, 647], [880, 645], [925, 640], [1210, 640], [1472, 790]],
  [[475, 808], [620, 730], [668, 733], [895, 733], [915, 728], [1198, 728], [1555, 935]],
  [[290, 1020], [595, 858], [648, 862], [720, 865], [885, 862], [1170, 862], ...low([[1365, 0], [1610, 143]])],
  [[355, 1020], [587, 897], [652, 902], [875, 900], [1160, 900], ...low([[1445, 0], [1610, 98]])],
  ...[
    [[40, 330], [505, 125], [620, 132], [975, 133], [1080, 136], [1435, 350], [1610, 453]],
    [[40, 465], [455, 245], [580, 255], [810, 258], [1028, 262], [1380, 480], [1610, 618]],
    [[40, 540], [415, 333], [530, 343], [985, 352], [1340, 570], [1610, 735]],
    [[40, 548], [395, 368], [680, 378], [800, 380], [975, 385], [1320, 610], [1610, 758]],
    [[40, 552], [390, 378], [680, 388], [960, 398], [1310, 620], [1610, 771]],
    [[40, 630], [330, 487], [445, 498], [650, 500], [895, 513], [1250, 738], [1610, 953]],
    [[40, 710], [258, 603], [370, 618], [700, 628], [820, 635], [1172, 860], [1430, 1015]],
    [[40, 830], [120, 790], [240, 803], [405, 808], [680, 825], [960, 1015]],
    [[40, 860], [85, 836], [240, 852], [360, 858], [500, 862], [645, 875], [850, 1015]],
    [[40, 880], [175, 893], [330, 903], [497, 908], [607, 917], [745, 1015]],
    [[175, 27], [235, 27]], [[170, 65], [230, 65]], [[95, 305], [150, 305]], [[40, 425], [100, 425]], [[40, 510], [65, 510]],
    [[1435, 353], [1495, 355]], [[1380, 482], [1442, 485]], [[1340, 574], [1395, 577]], [[1315, 615], [1380, 613]], [[1312, 622], [1372, 625]], [[1250, 738], [1305, 741]], [[1172, 860], [1230, 865]],
    [[1518, 90], [1575, 92]],
  ].map(low),
  [[348, 37], [405, 37]], [[352, 140], [412, 138]], [[352, 162], [412, 162]],
  [[1555, 935], [1612, 935]],
  [[915, 27], [925, 120], [935, 230], [940, 340], [938, 400], [930, 545], [920, 650], [908, 735], [885, 860], [875, 900], ...low([[835, 0], [795, 130], [745, 255], [700, 343], [680, 385], [615, 498], [540, 618], [405, 805], [365, 855], [330, 900], [228, 1015]])],
];

const labels = [
  ['NO.19', 925, 1048, 118], ['NO.18+11.833', 935, 1240, 227], ['NO.18+3.665', 942, 1217, 335], ['NO.18+1.835', 942, 1217, 358], ['NO.18', 942, 1062, 382],
  ['NO.17+10.000', 935, 1240, 514], ['NO.17', 925, 1045, 642], ['NO.16+13.217', 910, 1213, 730], ['NO.16+3.047', 885, 1160, 862], ['NO.16', 875, 998, 900],
  ['NO.15', 795, 917, 1152], ['NO.14+10.066', 743, 1045, 1277], ['NO.14+2.840', 702, 978, 1365], ['NO.14', 690, 803, 1402], ['NO.13+19.130', 680, 982, 1410],
  ['NO.13+9.932', 615, 890, 1523], ['NO.13', 540, 663, 1642], ['NO.12+3.997', 405, 680, 1830], ['NO.12', 365, 487, 1878], ['NO.11+16.256', 330, 633, 1923],
];

const View3D = () => (
  <svg width="561" height="670" viewBox="0 0 561 670" className="block">
    <defs>
      <linearGradient id="g3" x1="0" y1="0" x2="0" y2="1">
        <stop offset="0" stopColor="#4a8638" />
        <stop offset="1" stopColor="#4f9338" />
      </linearGradient>
    </defs>
    <rect width="561" height="670" fill="#0a0709" />
    <polygon points={P([[205, 27], [625, 27], [637, 127], [651, 340], [645, 516], [580, 325], [510, 255], [412, 165], [352, 160]])} fill="#386b34" stroke="#8dc21f" strokeWidth=".7" />
    <polygon points={P([[1202, 27], [1237, 27], [1245, 80], [1232, 225], [1225, 228], [1212, 108]])} fill="#82bc2b" />
    <polygon points={P([[632, 645], [265, 1020], ...low([[95, 100], [37, 160], [37, 900], [40, 880]]), ...[...pinkL].reverse().filter(([, y]) => y > 645)])} fill="#7fbb2e" />
    <polygon points={P(low([[37, 95], [95, 100], [37, 165]]))} fill="#a8704c" />
    <polygon points={P([[1225, 228], [1490, 468], [1490, 520], [1485, 655], [1472, 790], [1555, 935], [1612, 935], [1612, 2040], [745, 2034], [607, 1937], ...[...pinkR].reverse().filter(([, y]) => y > 228)])} fill="url(#g3)" stroke="#8dc21f" strokeWidth=".7" />
    <polygon points={band(pinkL, pinkR)} fill="#c6666a" />
    <polygon points={band(grayL, grayR)} fill="#8a8c8b" />
    <polygon points={band(darkL, darkR)} fill="#6c6d6d" />
    <polygon points={P([[348, 27], [408, 27], [412, 160], [352, 160]])} fill="#653838" />
    <polygon points={P(low([[175, 27], [235, 27], [145, 305], [100, 425], [65, 510], [40, 545], [37, 425], [95, 305]]))} fill="#653838" />
    <polygon points={P(stripR)} fill="#653838" />
    {lines.map((l, i) => <polyline key={i} points={P(l)} fill="none" stroke="#fff" strokeWidth="1" />)}
    {labels.map(([t, a, b, y]) => (
      <text key={t + y} x={px(a)} y={py(y)} textLength={(b - a) / 2.8} lengthAdjust="spacing" fontFamily="Liberation Sans" fontSize="14" fill="#fff">{t}</text>
    ))}
  </svg>
);

// ---- reference drawing ----
const RefCanvas = () => (
  <svg width="100%" height="100%" viewBox="84 -141 1403 804" preserveAspectRatio="none" className="block">
    <rect x="84" y="-141" width="1403" height="804" fill="#0a0709" />
    <path d="M84 -36H1487M84 -6H1487" stroke="#fff25a" strokeWidth="3" />
    <polygon points="520,288 980,278 915,285 780,295 630,302 590,295" fill="#f07a1a" />
    <polyline points="115,455 165,438 218,437 395,340 490,287 980,277 1000,288 1045,313 1250,428 1300,430 1487,533" fill="none" stroke="#e8141e" strokeWidth="3" />
    <polyline points="84,458 150,455 210,450 300,458 400,465 500,480 700,505 900,525 1100,543 1300,565 1487,577" fill="none" stroke="#fff" strokeWidth="3" />
    <polyline points="395,340 500,337 600,332 700,328 850,320 950,315 1045,313" fill="none" stroke="#fff" strokeWidth="3" />
    <path d="M450 307L520 303M540 304L570 302M960 287H1000" stroke="#fff" strokeWidth="3" />
    <path d="M515 250V127H958V250M490 160H980M490 160V250M604 160V250M643 160V250M826 160V250M865 160V250M978 160V250" fill="none" stroke="#fff" strokeWidth="3" />
    <path d="M735 185V342" stroke="#f8e71c" strokeWidth="3" />
    <path d="M126 452V385H145V452M171 435V370H217V435M1252 428V362H1300V428" fill="none" stroke="#fff" strokeWidth="3" />
    <path d="M130 452v15h6v-8zM204 438v12h6v-9zM1262 430v12h8v-12z" fill="#59c3d9" />
    <path d="M115 435v35" stroke="#e88a2a" strokeWidth="3" />
    <path d="M340 360l25 10M350 352v28M1105 355l25-8M1113 342v28M1422 510l25 8M1433 495v28M145 445l22 6M155 435v28" stroke="#dfe9f2" strokeWidth="3" />
    <g fontFamily="Liberation Sans" fontSize="14" fill="#dfe9f2" textAnchor="middle">
      <text x="733" y="68">NO.13</text>
      <text x="733" y="83">GH=74.97</text>
      <text x="733" y="98">FH=82.35</text>
      <text x="733" y="122">16.000</text>
      {[[502, '.750'], [558, '3.000'], [623, '1.250'], [688, '3.000'], [779, '3.000'], [843, '1.250'], [909, '3.000'], [966, '.750'], [133, '.822'], [193, '1.500'], [1275, '1.500']].map(([x, t], i) => (
        <text key={i} x={x} y={i > 7 ? (i === 10 ? 358 : 372) : 155} fontSize="12">{t}</text>
      ))}
      <text x="687" y="275" fontSize="12">-0.120</text>
      <text x="778" y="270" fontSize="12">0.120</text>
    </g>
  </svg>
);

const circles = [[108, 311], [142, 307], [241, 302], [255, 301], [265, 299], [373, 309], [402, 311], [454, 317], [548, 326], [602, 333], [696, 346], [742, 351], [801, 357], [832, 361], [842, 361], [856, 363], [989, 374], [1059, 381], [1135, 388], [1179, 391], [1281, 403], [1336, 409], [1409, 412], [1427, 412], [1460, 415], [1545, 419]];
const upper = [[627, 157], [660, 154], [741, 152], [821, 148], [855, 147]];

const SectionCanvas = () => (
  <svg width="492" height="283" viewBox="84 -207 1476 849" preserveAspectRatio="none" className="block">
    <rect x="84" y="-207" width="1476" height="849" fill="#0a0709" />
    <polyline points="84,311 240,302 450,318 740,352 990,373 1280,403 1545,419" fill="none" stroke="#b8b8b8" strokeWidth="3" />
    <path d="M264 290H306M1177 281H1217" stroke="#8c3a3a" strokeWidth="3" />
    <path d="M306 290L546 155M935 146L1177 281M1217 281L1460 415" stroke="#95c11f" strokeWidth="3" />
    <path d="M546 155L626 157M820 148L935 146" stroke="#ee8a8a" strokeWidth="3" />
    <path d="M626 157L820 148" stroke="#8c8c8c" strokeWidth="3" />
    <path d="M742 78V440" stroke="#fff" strokeWidth="4" strokeDasharray="9 15" />
    {circles.map(([x, y]) => <circle key={x} cx={x} cy={y} r="9" fill="none" stroke="#c8c8c8" strokeWidth="3" />)}
    {upper.map(([x, y]) => <circle key={x} cx={x} cy={y} r="9" fill="none" stroke="#9a9a9a" strokeWidth="3" />)}
    <circle cx="546" cy="155" r="9" fill="none" stroke="#ee8a8a" strokeWidth="3" />
    <circle cx="264" cy="290" r="9" fill="none" stroke="#8c3a3a" strokeWidth="3" />
    <circle cx="1217" cy="281" r="9" fill="none" stroke="#8c3a3a" strokeWidth="3" />
    {[[241, 302], [306, 290], [935, 146], [1177, 281], [1460, 415]].map(([x, y]) => <circle key={x} cx={x} cy={y} r="9" fill="none" stroke="#95c11f" strokeWidth="3" />)}
  </svg>
);

// ---- docked panel chrome ----
const PanelTitle = ({ title, h = 'h-[20px]' }) => (
  <div className={`${h} shrink-0 bg-[#b1c7e0] flex items-center px-[4px] border-t border-[#d6e3f1]`}>
    <span className="text-[13px] text-[#2a5c9c] tracking-[1px] flex-1">{title}</span>
    <Pin size={11} className="text-[#46689a] mr-[9px]" />
    <X size={13} className="text-[#46689a]" />
  </div>
);
const Toolbar = ({ h = 'h-[24px]', children, className = '' }) => (
  <div className={`${h} shrink-0 bg-gradient-to-b from-[#e3edf8] to-[#b4cbe6] flex items-center ${className}`}>{children}</div>
);
const Tool = ({ w = 'w-[22px]', on, children }) => (
  <div className={`${w} h-[22px] shrink-0 flex items-center justify-center ${on === 'o' ? 'bg-gradient-to-b from-[#fde8b4] to-[#fbc56a] border border-[#c6ab74] rounded-[2px]' : on ? 'bg-[#dfe8f3] border border-[#a9bcd4] rounded-[2px]' : ''}`}>{children}</div>
);
const Drop = ({ m = 'mx-[5px]' }) => <span className={`${m} shrink-0`}><Caret c="#46689a" /></span>;

const SheetTab = ({ label, active, w = 'w-[86px]' }) => (
  <div className={`${w} h-[17px] shrink-0 -ml-[1px] text-center text-[10.8px] leading-[17px] [clip-path:polygon(0_100%,7%_0,100%_0,93%_100%)] whitespace-nowrap overflow-hidden ${active ? 'bg-gradient-to-b from-[#ea5a5f] via-[#fbe4e4] to-[#ffffff] text-black' : 'bg-gradient-to-b from-[#f9c9c9] via-[#fff] to-[#bcd2ec] text-[#102f63]'}`}>{label}</div>
);

export default function App() {
  return (
    <div className="w-[1600px] h-[860px] overflow-hidden flex flex-col bg-[#bfd3ed] font-['Liberation_Sans','Noto_Sans_CJK_JP',sans-serif]">
      {/* title bar */}
      <div className="relative h-[30px] shrink-0 bg-white flex items-center">
        <div className="absolute left-[2px] top-[4px] z-10"><Logo /></div>
        <div className="ml-[38px] w-[61px] h-[21px] mt-[1px] rounded-r-full bg-gradient-to-b from-[#eef0f2] to-[#d4d7da] border border-[#c6c9cc] flex items-center gap-[5px] pl-[11px]">
          <Folder s={17} /><Floppy />
        </div>
        <div className="ml-[10px] flex flex-col items-center gap-[1px]">
          <div className="w-[6px] h-px bg-[#2c4a7c]" />
          <Caret c="#2c4a7c" />
        </div>
        <div className="flex-1" />
        <Minus size={14} className="text-[#111] mr-[32px]" />
        <Copy size={11} className="text-[#111] mr-[34px] -scale-x-100" />
        <X size={15} strokeWidth={1.5} className="text-[#111] mr-[18px]" />
      </div>

      {/* ribbon tabs */}
      <div className="h-[22px] shrink-0 bg-[#bfd3ed] flex items-end border-b border-[#8fb0d6] text-[12px] text-[#15428b]">
        <span className="ml-[61px] w-[77px] leading-[21px]">座標管理</span>
        <span className="w-[52px] leading-[21px]">平面</span>
        <span className="w-[40px] leading-[21px]">縦断</span>
        <span className="w-[47px] h-[21px] -mb-px text-center leading-[21px] rounded-t-[3px] bg-gradient-to-b from-[#e4eef9] to-[#dbe7f4] border border-b-0 border-[#8fb0d6]">横断</span>
        <div className="flex-1" />
        <span className="mb-[3px] w-[12px] h-[12px] rounded-full bg-[#4a7fc0] text-white text-[9px] leading-[12px] text-center font-bold">?</span>
        <span className="ml-[2px] mr-[8px] mb-[7px]"><Caret /></span>
      </div>

      <Ribbon />

      {/* work area */}
      <div className="flex-1 min-h-0 flex bg-[#bcd2ec]">
        <LeftPanel />

        <div className="ml-[6px] w-[561px] shrink-0 flex flex-col">
          <PanelTitle title="3 D" />
          <Toolbar>
            <Tool><ZoomBox /></Tool><Tool><Magnifier /></Tool><div className="w-[4px]" /><Sep /><div className="w-[5px]" />
            <Tool><Back /></Tool><div className="w-[3px]" /><Sep /><div className="w-[3px]" />
            <Tool><Bulb /></Tool>
            <Tool on="b"><Road /></Tool>
            <Tool><Tree /></Tool>
            <Tool on="o"><BulbMap /></Tool>
            <Tool on="o"><IpBulb /></Tool>
            <Tool><Wave /></Tool>
            <Tool><Tools /></Tool>
            <div className="w-[3px]" /><Sep /><div className="w-[5px]" />
            <Tool><Cube /></Tool><Drop m="mx-[3px]" />
            <Tool><Cube glass /></Tool><Drop m="mx-[3px]" />
            <div className="w-[5px]" /><Sep /><div className="w-[3px]" />
            <Tool><RulerDot /></Tool><Drop m="mx-[3px]" />
            <Tool><LandImg /></Tool>
          </Toolbar>
          <div className="h-[670px] overflow-hidden"><View3D /></div>
        </div>

        <div className="ml-[7px] flex-1 min-w-0 flex flex-col">
          <PanelTitle title="参照図面" />
          <Toolbar className="pl-[3px]">
            <Tool><Folder /></Tool><Tool><XDoc /></Tool><Tool><Clock /></Tool><div className="w-[2px]" /><Sep /><div className="w-[3px]" />
            <Tool><GreenMode /></Tool><Tool><BlueMode /></Tool><Tool on="o"><RedMode /></Tool><Tool><Help /></Tool>
            <div className="w-[2px]" /><Sep /><div className="w-[3px]" />
            <Tool><Layers /></Tool>
            <div className="ml-[3px] w-[146px] h-[20px] bg-white flex items-center pl-[4px] text-[12px] text-black">
              <span className="flex-1">横断図7-1 (1/100)</span>
              <span className="w-[14px] h-full bg-[#d2e0f0] flex items-center justify-center"><Caret c="#46689a" /></span>
            </div>
            <div className="w-[2px]" />
            <Tool><Note /></Tool><Tool><Calc /></Tool><Tool><Windows /></Tool>
            <div className="w-[3px]" /><Sep /><div className="w-[8px]" />
            <Tool><Plug /></Tool><Drop /><Tool><Arrow /></Tool><Drop />
          </Toolbar>
          <div className="flex h-[316px] shrink-0">
            <div className="flex-1 min-w-0 flex flex-col">
              <div className="h-[23px] shrink-0 bg-[#eeeeec] text-[12px] leading-[20px] text-black tracking-[-3.2px] whitespace-nowrap overflow-hidden pl-0 -ml-[3px]">【コマンドを選択してください】</div>
              <div className="h-[272px] shrink-0 border-[2px] border-white border-b-0 ml-0"><RefCanvas /></div>
              <div className="h-[19px] shrink-0 flex items-center bg-[#a9c3e0] overflow-hidden">
                <div className="w-[64px] shrink-0 flex items-center gap-[1px] pl-[1px]">
                  {['first', 'prev', 'next', 'last'].map((d) => (
                    <span key={d} className="w-[15px] h-[15px] bg-[#d2e0f0] flex items-center justify-center"><Nav d={d} s={10} c="#4a70a8" /></span>
                  ))}
                </div>
                <div className="w-[56px] h-[17px] shrink-0 overflow-hidden text-[10.8px] leading-[17px] text-[#102f63] bg-gradient-to-b from-[#f9c9c9] via-[#fff] to-[#bcd2ec] whitespace-nowrap">S0030.SFC</div>
                <SheetTab label="D0CS0040.SFC" />
                <SheetTab label="D0CS0050.SFC" />
                <SheetTab label="D0CS0060.SFC" />
                <SheetTab label="D0CS0070.SFC" active />
                <SheetTab label="D" w="w-[12px]" />
              </div>
            </div>
            <div className="w-[25px] shrink-0 bg-gradient-to-r from-[#d8e5f4] to-[#c5d7ec] flex flex-col items-center pt-[4px]">
              <div className="h-[21px]"><S><path d="M2 3h10M7 3v12" stroke="#2a66ad" strokeWidth="1.4" /><path d="M9 15l8-9 2 2-8 9-3 1z" fill="#eebf3c" /></S></div>
              <div className="h-[18px]"><SlopeRuler /></div>
              <svg width="6" height="8" className="my-[3px]"><path d="M0 0l5 4-5 4z" fill="#46689a" /></svg>
              <span className="text-[12px] leading-[16px] font-bold tracking-[-.5px] text-[#3d4a5c]">abc</span>
              <div className="h-px w-[20px] bg-[#8fa9c8] my-[5px]" />
              <div className="h-[22px]"><Bulb badge="check" /></div>
              <div className="h-[22px]"><Bulb c="#e9d9a0" badge="arrow" /></div>
              <div className="h-px w-[20px] bg-[#8fa9c8] mt-px mb-[4px]" />
              <div className="h-[22px]">
                <S><path d="M3 3h14v14" fill="none" stroke="#2a4fa8" /><path d="M4 5l6 6 7-7M4 16l6-5 6 5" stroke="#2f8a3a" fill="none" /><circle cx="3" cy="3" r="1.2" fill="#e0001b" /><circle cx="17" cy="17" r="1.2" fill="#e0001b" /></S>
              </div>
              <div className="h-[22px]">
                <S><path d="M3 15L13 3l4 3-8 12H3z" fill="#e8b53c" stroke="#8a6418" strokeWidth=".7" /><path d="M1 18h18" stroke="#3a9a42" strokeWidth="1.6" /></S>
              </div>
            </div>
          </div>

          <div className="h-[3px] shrink-0" />
          <PanelTitle title="横断" />
          <Toolbar className="pl-[5px]">
            <Tool><ZoomBox /></Tool><Tool><Magnifier /></Tool><Tool><Refresh /></Tool><div className="w-[3px]" /><Sep /><div className="w-[4px]" />
            <Tool><Bulb /></Tool><Tool><Tools /></Tool><Tool><SlopeRuler /></Tool><Tool><Offset /></Tool>
            <div className="w-[3px]" /><Sep /><div className="w-[4px]" />
            <Tool><Slope /></Tool><Tool><Slope tree /></Tool>
            <div className="w-[3px]" /><Sep /><div className="w-[4px]" />
            <Tool><Nav d="first" s={16} /></Tool><Tool><Nav d="prev" s={16} /></Tool><Tool><Nav d="next" s={16} /></Tool><Tool><Nav d="last" s={16} /></Tool>
          </Toolbar>
          <div className="relative w-[492px] h-[283px] ml-[2px] shrink-0">
            <SectionCanvas />
            <div className="absolute left-0 w-[436px] top-[16px] text-center text-[14px] leading-[19px] text-white">
              <div className="h-[20px] text-[13px] tracking-[-.3px]">NO. 13</div>
              <div className="h-[19px]">道路面</div>
              <div className="h-[19px]">路体盛土工</div>
              <div className="h-[18px] text-[13px]">CL</div>
            </div>
          </div>
          <div className="flex-1 bg-[#bcd2ec] flex items-center pl-[5px] text-[13px] text-[#1d4ea0] border-t border-[#8fb0d6]">
            <GreenMode /><span className="ml-[3px] w-[39px]">平面</span>
            <BlueMode /><span className="ml-[3px] w-[38px]">縦断</span>
            <div className="h-[20px] w-[51px] bg-[#e4eef9] border border-[#9fbbdc] rounded-b-[3px] flex items-center gap-[2px] pl-[2px] -mt-[3px]"><RedMode /><span>横断</span></div>
          </div>
        </div>
      </div>
    </div>
  );
}
